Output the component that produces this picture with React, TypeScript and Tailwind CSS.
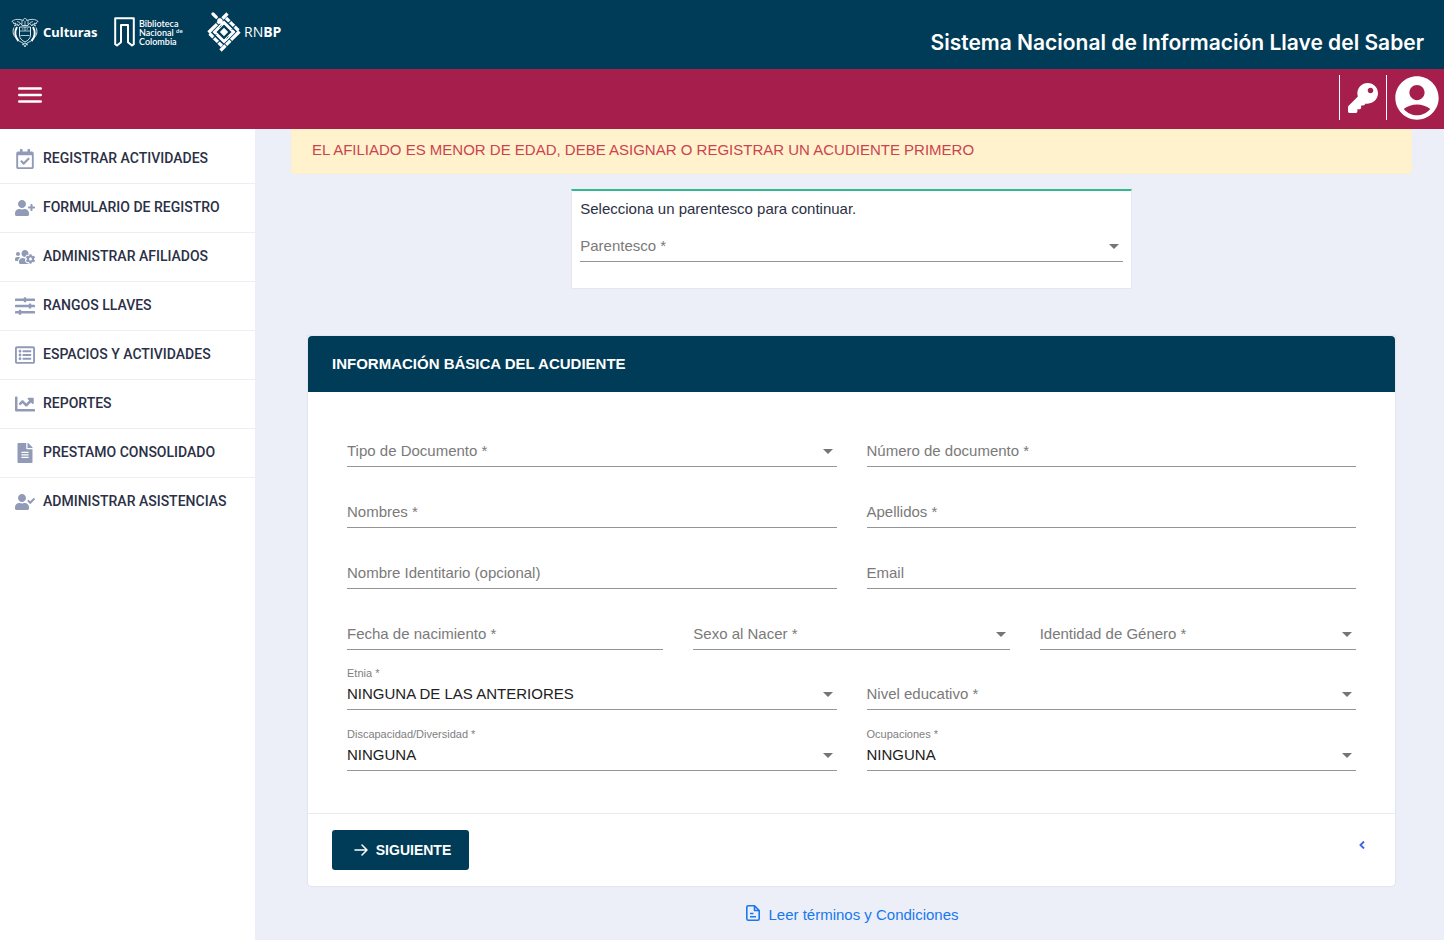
import React, { useId } from "react";
import {
  FaRegCalendarCheck,
  FaUserPlus,
  FaUsersCog,
  FaSlidersH,
  FaRegListAlt,
  FaChartLine,
  FaFileAlt,
  FaUserCheck,
  FaKey,
} from "react-icons/fa";
import { MdAccountCircle } from "react-icons/md";
import type { IconType } from "react-icons";

const menu: { label: string; icon: IconType }[] = [
  { label: "REGISTRAR ACTIVIDADES", icon: FaRegCalendarCheck },
  { label: "FORMULARIO DE REGISTRO", icon: FaUserPlus },
  { label: "ADMINISTRAR AFILIADOS", icon: FaUsersCog },
  { label: "RANGOS LLAVES", icon: FaSlidersH },
  { label: "ESPACIOS Y ACTIVIDADES", icon: FaRegListAlt },
  { label: "REPORTES", icon: FaChartLine },
  { label: "PRESTAMO CONSOLIDADO", icon: FaFileAlt },
  { label: "ADMINISTRAR ASISTENCIAS", icon: FaUserCheck },
];

function CrestLogo() {
  return (
    <svg viewBox="0 0 28 31" className="h-[31px] w-7" fill="none" stroke="#dbe6ec" strokeWidth="1">
      <path d="M14 1.500c-1.300 0-1.800 1-1.600 2L9 2.600C6 2 3 2.500.8 4.500c1.500.3 2 1 1.700 2L5 6.200 3.500 9l3-1.800L7 9l2.500-3L11 8.500h6L18.500 6 21 9l.5-1.800 3 1.800L23 6.200l2.500.3c-.3-1 .2-1.700 1.700-2C25 2.500 22 2 19 2.600l-3.400.9c.2-1-.3-2-1.600-2z" strokeWidth=".9" />
      <path d="M6 4.500 9 5.500M22 4.500l-3 1M11 3.500v4M17 3.500v4M14 4v4" strokeWidth=".8" />
      <path d="M8.500 10h11v8c0 3.500-2.500 5.500-5.500 7-3-1.500-5.500-3.500-5.500-7z" />
      <path d="M9 14h10M9.500 18.500h9M14 10v4M11 12h1.500M15.500 12H17" strokeWidth=".8" />
      <path d="M6 10C3.500 14 3.500 20 7.500 24M22 10c2.500 4 2.500 10-1.500 14" stroke="#fff" strokeWidth="2" />
      <path d="M3 10.500C1.300 14 2 18 4.500 20.500M25 10.500c1.700 3.500 1 7.500-1.500 10" strokeWidth="1" />
      <path d="m8 24 4 2 2 4 2-4 4-2M11 28l3-2 3 2" strokeWidth=".9" />
    </svg>
  );
}

function LibraryLogo() {
  return (
    <svg viewBox="0 0 21 30" className="h-[30px] w-[21px]" fill="none" stroke="#fff" strokeWidth="2" strokeLinejoin="round">
      <path d="M1.200 1.200h18.600v26l-1.800 1.300-4-3.300V8H7v17.200l-4 3.300-1.800-1.300z" />
    </svg>
  );
}

function NetworkLogo() {
  return (
    <svg viewBox="0 0 34 40" className="h-10 w-[34px]" stroke="#fff" strokeWidth="3.200" fill="none">
      <path d="M1.500 20.500 20.500 1.500" strokeDasharray="12 .9 6 .9" />
      <path d="M32.500 19.500 13.500 38.500" strokeDasharray="12 .9 6 .9" />
      <path d="M2.500 21.500 15 34" strokeDasharray="5.500 .9" />
      <path d="M31.500 18.500 19 6" strokeDasharray="5.500 .9" />
      <path d="M6 2l3.200 3.200" strokeLinecap="round" />
      <path d="M11 7l4.500 4.500" />
      <path d="M7.500 20 17 10.500 26.500 20 17 29.500z" strokeWidth="2.900" />
      <path d="M7 24.500 9.500 22M24.500 18l2.500-2.500M12.500 15.500l2-2M19.500 26.500l2-2" stroke="#003b57" strokeWidth=".8" />
      <path d="M17 15.800 21.200 20 17 24.200 12.800 20z" fill="#fff" stroke="none" />
    </svg>
  );
}

type FieldProps = { label: string; value?: string; select?: boolean };

function Field({ label, value, select }: FieldProps) {
  const id = useId();
  const control = "block h-6 w-full appearance-none bg-transparent text-[15px] leading-6 text-[#212121] outline-none";
  return (
    <div className="relative h-[61px] min-w-0">
      <label
        htmlFor={id}
        className={
          value
            ? "pointer-events-none absolute left-0 top-[10px] text-[11px] leading-4 text-[#808080]"
            : "pointer-events-none absolute left-0 top-[27px] text-[15px] leading-6 text-[#7a7a7a]"
        }
      >
        {label}
      </label>
      <div className="pt-[27px]">
        <div className="border-b border-[#949494] pb-[3px]">
          {select ? (
            <select id={id} className={control}>
              <option>{value ?? ""}</option>
            </select>
          ) : (
            <input id={id} type="text" className={control} />
          )}
        </div>
      </div>
      {select && (
        <svg viewBox="0 0 10 5" className="pointer-events-none absolute right-1 top-[37px] h-[5px] w-[10px]" fill="#757575">
          <path d="M0 0h10L5 5z" />
        </svg>
      )}
    </div>
  );
}

export default function App() {
  return (
    <div className="flex min-h-screen flex-col bg-[#eceff7] font-['Liberation_Sans',Arial,sans-serif] text-[15px]">
      <header className="flex h-[69px] items-start justify-between bg-[#003b57] text-white">
        <div className="flex items-center pl-[11px] pt-3">
          <CrestLogo />
          <span className="ml-1 w-[71px] whitespace-nowrap font-['Noto_Sans',sans-serif] text-[13px] font-bold leading-5">Culturas</span>
          <LibraryLogo />
          <span className="ml-1 w-[68px] whitespace-nowrap font-[Lato,sans-serif] text-[9px] font-semibold leading-[9px]">
            Biblioteca
            <br />
            Nacional <sup className="text-[6px] leading-none">de</sup>
            <br />
            Colombia
          </span>
          <NetworkLogo />
          <span className="ml-[3px] font-['Open_Sans',sans-serif] text-[14px] leading-5">
            RN<b>BP</b>
          </span>
        </div>
        <h1 className="whitespace-nowrap pr-5 pt-7 font-[Inter,sans-serif] text-[21px] font-semibold leading-[30px]">
          Sistema Nacional de Información Llave del Saber
        </h1>
      </header>

      <div className="flex h-[60px] justify-between bg-[#a61f4c] text-white">
        <button type="button" aria-label="Menú" className="flex h-[52px] items-center px-[18px]">
          <svg viewBox="0 0 24 16" className="h-4 w-6" stroke="#fff" strokeWidth="2.600" strokeLinecap="round">
            <path d="M1.300 1.500h21.400M1.300 8h21.400M1.300 14.500h21.400" />
          </svg>
        </button>
        <div className="flex pt-[6px]">
          <button type="button" aria-label="Cambiar clave" className="flex h-[45px] w-[47px] items-center justify-center border-l border-white">
            <FaKey className="size-[30px]" />
          </button>
          <button type="button" aria-label="Cuenta" className="flex h-[45px] w-[58px] items-center justify-center border-l border-white pl-[3px]">
            <MdAccountCircle className="size-[52px] shrink-0" />
          </button>
        </div>
      </div>

      <div className="flex flex-1">
        <nav className="w-[255px] shrink-0 bg-white pt-[6px]">
          <ul>
            {menu.map(({ label, icon: Icon }) => (
              <li key={label} className="h-[49px] border-b border-[#eceef2] last:border-0">
                <a href="#" className="flex h-12 items-center gap-2 pl-[15px] text-[14px] font-medium text-[#2b3046]">
                  <Icon className="size-5 text-[#919bb8]" />
                  <span className="pb-[2px] font-[Roboto,sans-serif]">{label}</span>
                </a>
              </li>
            ))}
          </ul>
        </nav>

        <main className="flex min-w-0 flex-1 flex-col pl-9 pr-8">
          <div role="alert" className="h-[45px] rounded-b border border-t-0 border-[#fcefc9] bg-[#fff2cd] pl-5 pt-[9px] leading-6 text-[#cc4350]">
            EL AFILIADO ES MENOR DE EDAD, DEBE ASIGNAR O REGISTRAR UN ACUDIENTE PRIMERO
          </div>

          <section className="mx-auto mt-[15px] h-[100px] w-1/2 border border-t-2 border-[#e3e7ef] border-t-[#34b890] bg-white px-2 pt-[6px]">
            <p className="leading-6 text-[#2b3046]">Selecciona un parentesco para continuar.</p>
            <div className="-mt-[14px]">
              <Field label="Parentesco *" select />
            </div>
          </section>

          <form className="mx-[17px] mt-[47px] rounded-b bg-white shadow-[0_0_1px_1px_#e1e5ee]">
            <h2 className="flex h-14 items-center rounded-t bg-[#003b57] px-6 font-bold text-white">INFORMACIÓN BÁSICA DEL ACUDIENTE</h2>
            <div className="px-[39px] pb-9 pt-5">
              <div className="grid grid-cols-2 gap-x-[30px]">
                <Field label="Tipo de Documento *" select />
                <Field label="Número de documento *" />
                <Field label="Nombres *" />
                <Field label="Apellidos *" />
                <Field label="Nombre Identitario (opcional)" />
                <Field label="Email" />
              </div>
              <div className="grid grid-cols-3 gap-x-[30px]">
                <Field label="Fecha de nacimiento *" />
                <Field label="Sexo al Nacer *" select />
                <Field label="Identidad de Género *" select />
              </div>
              <div className="-mt-px grid grid-cols-2 gap-x-[30px]">
                <Field label="Etnia *" value="NINGUNA DE LAS ANTERIORES" select />
                <Field label="Nivel educativo *" select />
                <Field label="Discapacidad/Diversidad *" value="NINGUNA" select />
                <Field label="Ocupaciones *" value="NINGUNA" select />
              </div>
            </div>
            <div className="flex justify-between border-t border-[#e8ebf1] px-6 py-4">
              <button type="button" className="flex h-10 w-[137px] items-center justify-center gap-2 rounded-[3px] bg-[#003b57] pl-1 text-[14px] font-bold text-white">
                <svg viewBox="0 0 14 12" className="h-3 w-[14px]" fill="none" stroke="#fff" strokeWidth="1.500" strokeLinecap="round" strokeLinejoin="round">
                  <path d="M1 6h12M8 1l5 5-5 5" />
                </svg>
                SIGUIENTE
              </button>
              <button type="button" aria-label="Anterior" className="mr-px flex h-[30px] w-4 items-center justify-center">
                <svg viewBox="0 0 6 8" className="h-2 w-[6px]" fill="none" stroke="#3d66e0" strokeWidth="1.900">
                  <path d="M5 .5 1.500 4 5 7.500" />
                </svg>
              </button>
            </div>
          </form>

          <a href="#" className="mx-auto mt-[17px] flex h-6 items-center gap-2 pl-[2px] text-[#1878f0]">
            <svg viewBox="0 0 14 16" className="mb-1 h-4 w-[14px]" fill="none" stroke="#1878f0" strokeWidth="1.600" strokeLinejoin="round">
              <path d="M8.500.8H2.300C1.400.8.800 1.400.800 2.300v11.400c0 .9.600 1.500 1.500 1.500h9.400c.9 0 1.500-.6 1.500-1.500V5.500zM8.500.8v4.700h4.700M4 8.500h3.500M4 11.800h6" />
            </svg>
            Leer términos y Condiciones
          </a>
        </main>
      </div>
    </div>
  );
}
